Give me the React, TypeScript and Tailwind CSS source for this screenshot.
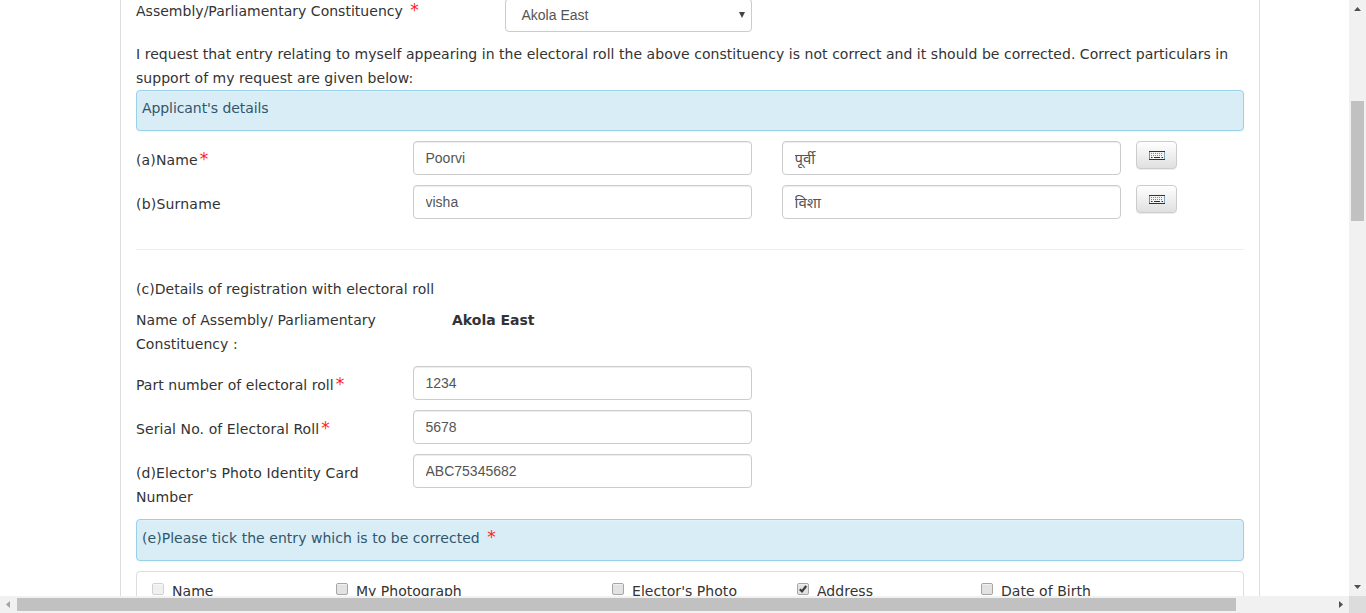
import type { ReactNode } from "react";

const Star = ({ className = "" }: { className?: string }) => (
  <span className={`text-[17px] leading-none text-[#ff2222] ${className}`}>*</span>
);

const Field = ({ value, className = "text-sm" }: { value: string; className?: string }) => (
  <input
    readOnly
    defaultValue={value}
    className={`block h-[34px] w-[339px] shrink-0 rounded border border-[#cccccc] bg-white pr-3 pl-[11.5px] font-['Liberation_Sans','Noto_Sans',sans-serif] tracking-normal text-[#555555] shadow-[inset_0_1px_1px_rgba(0,0,0,0.075)] outline-none ${className}`}
  />
);

const KeyboardIcon = () => (
  <svg width="16" height="10" viewBox="0 0 16 10" className="block">
    <rect x="0" y="0" width="16" height="9" fill="#f3f3f3" />
    <path d="M0 0.5h16M0 8.5h16" stroke="#333333" />
    <path d="M0.5 1v7" stroke="#a98a5e" />
    <path d="M15.5 1v7" stroke="#7fa9bd" />
    <path d="M2 2.5h12M2 4.5h12" stroke="#8a8a8a" strokeDasharray="1 1" />
    <path d="M2 6.5h1.500M5 6.5h6M12.500 6.5h1.500" stroke="#333333" />
  </svg>
);

const KeyboardButton = () => (
  <button className="ml-[15px] flex h-[28px] w-[41px] justify-center rounded border border-[#cccccc] bg-linear-to-b from-white to-[#e0e0e0] pt-[9px] shadow-[inset_0_1px_0_rgba(255,255,255,0.15),0_1px_1px_rgba(0,0,0,0.075)]">
    <KeyboardIcon />
  </button>
);

const FormRow = ({ label, children }: { label: ReactNode; children: ReactNode }) => (
  <div className="mb-2.5 flex h-[34px] items-start">
    <div className="w-[277px] shrink-0 pt-[7px]">{label}</div>
    {children}
  </div>
);

const Banner = ({ className, children }: { className: string; children: ReactNode }) => (
  <div
    className={`rounded border border-[#9acfea] bg-[#d9edf7] px-[5px] text-[#31566c] shadow-[inset_0_1px_0_rgba(255,255,255,0.25),0_1px_2px_rgba(0,0,0,0.05)] ${className}`}
  >
    {children}
  </div>
);

const Option = ({
  label,
  checked = false,
  faded = false,
  className,
}: {
  label: string;
  checked?: boolean;
  faded?: boolean;
  className: string;
}) => (
  <div className={`flex shrink-0 ${className}`}>
    <svg width="12" height="12" viewBox="0 0 12 12" className={`mt-1 mr-2 block shrink-0 overflow-visible ${faded ? "opacity-50" : ""}`}>
      <rect x="0.5" y="0.5" width="11" height="11" rx="1.5" fill="#e2e2e2" stroke="#a6a6a6" />
      <path d="M1.5 1.5h9" stroke="#f0f0f0" />
      {checked && <path d="M2.8 6.2L5 8.4L9.2 3" fill="none" stroke="#3c3c3c" strokeWidth="2.2" />}
    </svg>
    <span className="whitespace-nowrap">{label}</span>
  </div>
);

export default function App() {
  return (
    <div className="flex h-[613px] w-[1366px] flex-col overflow-hidden bg-white font-['DejaVu_Sans',sans-serif] text-sm leading-6 tracking-[0.04px] text-[#333333]">
      <div className="flex h-[596px]">
        <main className="h-[596px] w-[1349px] overflow-hidden pl-[120px]">
          <div className="h-[596px] w-[1140px] border-x border-[#dddddd] px-[15px]">
            <div className="flex h-[42px] items-start">
              <div className="-mt-px w-[369px] shrink-0 tracking-[0.02px]">
                Assembly/Parliamentary Constituency <Star className="ml-[3px]" />
              </div>
              <div className="-mt-0.5 flex h-[34px] w-[247px] items-center justify-between rounded border border-[#cccccc] pr-1.5 pl-[15.5px] font-['Liberation_Sans',sans-serif] tracking-normal text-[#555555] shadow-[inset_0_1px_1px_rgba(0,0,0,0.075)]">
                <span>Akola East</span>
                <svg width="6" height="6" viewBox="0 0 6 6">
                  <path d="M0 0h6L3 6z" fill="#444444" />
                </svg>
              </div>
            </div>
            <p className="h-12 whitespace-nowrap">
              I request that entry relating to myself appearing in the electoral roll the above constituency is not correct and it should be corrected. Correct particulars in
              <br />
              support of my request are given below:
            </p>
            <Banner className="mb-2.5 h-[41px] pt-[5px] tracking-[-0.08px]">Applicant&#39;s details</Banner>
            <FormRow label={<><span className="tracking-[0.15px]">(a)Name</span><Star className="ml-0.5" /></>}>
              <Field value="Poorvi" />
              <Field value="पूर्वी" className="ml-[30px] text-[15px]" />
              <KeyboardButton />
            </FormRow>
            <FormRow label={<span className="tracking-[0.2px]">(b)Surname</span>}>
              <Field value="visha" />
              <Field value="विशा" className="ml-[30px] text-[15px]" />
              <KeyboardButton />
            </FormRow>
            <hr className="mt-[30px] mb-[27px] border-[#eeeeee]" />
            <div className="mb-[7px]">(c)Details of registration with electoral roll</div>
            <div className="mb-2.5 flex">
              <div className="w-[316px] shrink-0 tracking-[0.06px]">
                Name of Assembly/ Parliamentary
                <br />
                Constituency :
              </div>
              <b className="tracking-normal">Akola East</b>
            </div>
            <FormRow label={<>Part number of electoral roll<Star className="ml-0.5" /></>}>
              <Field value="1234" />
            </FormRow>
            <FormRow label={<><span className="tracking-[0.08px]">Serial No. of Electoral Roll</span><Star className="ml-0.5" /></>}>
              <Field value="5678" />
            </FormRow>
            <div className="mb-2.5 flex h-[55px] items-start">
              <div className="w-[277px] shrink-0 pt-[7px] tracking-[0.1px]">
                (d)Elector&#39;s Photo Identity Card
                <br />
                Number
              </div>
              <Field value="ABC75345682" />
            </div>
            <Banner className="mb-2.5 h-[42px] pt-[6px]">
              (e)Please tick the entry which is to be corrected <Star className="ml-[3px]" />
            </Banner>
            <div className="flex h-20 rounded border border-[#dddddd] pt-[7px] pl-[15px]">
              <Option label="Name" faded className="w-[184px]" />
              <Option label="My Photograph" className="w-[276px] tracking-normal" />
              <Option label="Elector's Photo" className="w-[185px]" />
              <Option label="Address" checked className="w-[184px]" />
              <Option label="Date of Birth" className="w-[184px]" />
            </div>
          </div>
        </main>
        <div className="flex w-[17px] flex-col items-center bg-[#f1f1f1]">
          <svg width="17" height="17" viewBox="0 0 17 17" className="block">
            <path d="M5 11h7L8.500 7z" fill="#505050" />
          </svg>
          <div className="mt-[84px] h-[120px] w-[13px] bg-[#c1c1c1]" />
          <svg width="17" height="17" viewBox="0 0 17 17" className="mt-auto block">
            <path d="M5 6h7L8.500 10z" fill="#505050" />
          </svg>
        </div>
      </div>
      <div className="flex h-[17px] items-center bg-[#f1f1f1]">
        <svg width="17" height="17" viewBox="0 0 17 17" className="block">
          <path d="M10 5v7L6 8.500z" fill="#a3a3a3" />
        </svg>
        <div className="h-[13px] w-[1219px] bg-[#c1c1c1]" />
        <svg width="17" height="17" viewBox="0 0 17 17" className="ml-auto block">
          <path d="M7 5v7l4-3.500z" fill="#505050" />
        </svg>
        <div className="h-[17px] w-[17px] bg-[#dcdcdc]" />
      </div>
    </div>
  );
}
